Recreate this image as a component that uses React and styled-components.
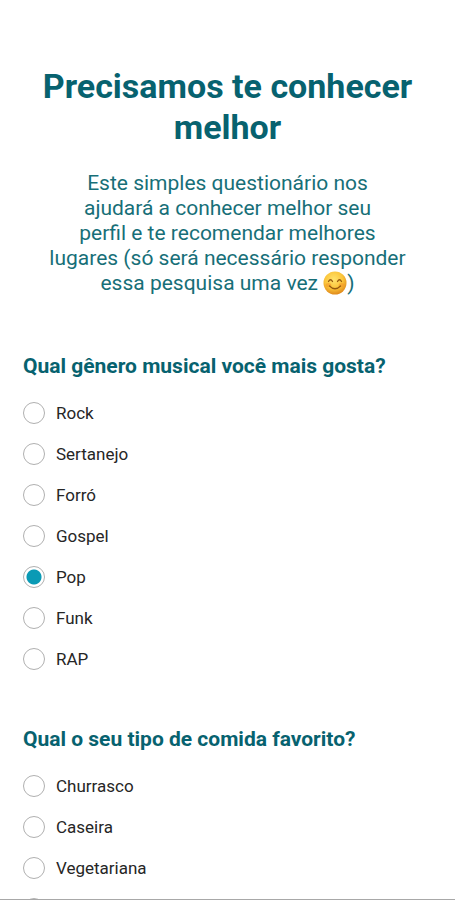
import React from "react";
import styled, { createGlobalStyle } from "styled-components";

const GlobalStyle = createGlobalStyle`
  *, *::before, *::after { box-sizing: border-box; }
  html, body, #root { height: 100%; }
  body { margin: 0; background: #fff; font-family: Roboto, sans-serif; }
`;

const Screen = styled.main`
  height: 100%;
  overflow: hidden;
  padding: 66px 23px 0;
  border-bottom: 1px solid #a8a8a8;
`;

const Title = styled.h1`
  margin: 0;
  color: #07626f;
  font-size: 34px;
  line-height: 41px;
  font-weight: 700;
  text-align: center;
`;

const Intro = styled.p`
  margin: 23px 0 57px;
  color: #176f78;
  font-size: 21px;
  line-height: 25px;
  text-align: center;
`;

const Smile = styled.svg`
  width: 24px;
  height: 24px;
  vertical-align: -5px;
`;

const Questions = styled.div`
  display: grid;
  gap: 47px;
`;

const Question = styled.fieldset`
  margin: 0;
  padding: 0;
  border: 0;
  min-width: 0;
`;

const Legend = styled.legend`
  padding: 0;
  color: #07626f;
  font-size: 21px;
  line-height: 26px;
  font-weight: 700;
`;

const Options = styled.div`
  display: grid;
  padding-top: 13px;
`;

const Option = styled.label`
  display: flex;
  align-items: center;
  gap: 11px;
  height: 41px;
  color: #262626;
  font-size: 17px;
`;

const Radio = styled.input`
  appearance: none;
  flex: none;
  width: 22px;
  height: 22px;
  margin: 0;
  border: 1px solid #b0b0b0;
  border-radius: 50%;
  background: #fff;

  &:checked {
    background: radial-gradient(circle, #0a9ab5 7px, #fff 8px);
  }
`;

const questions = [
  {
    id: "musica",
    text: "Qual gênero musical você mais gosta?",
    selected: "Pop",
    options: ["Rock", "Sertanejo", "Forró", "Gospel", "Pop", "Funk", "RAP"],
  },
  {
    id: "comida",
    text: "Qual o seu tipo de comida favorito?",
    options: ["Churrasco", "Caseira", "Vegetariana", ""],
  },
];

function SmileIcon() {
  return (
    <Smile viewBox="0 0 24 24" role="img" aria-label="Rosto sorridente">
      <defs>
        <radialGradient id="face" cx="0.45" cy="0.35" r="0.65">
          <stop offset="0" stopColor="#ffe36c" />
          <stop offset="0.6" stopColor="#fbc53a" />
          <stop offset="1" stopColor="#e08a1c" />
        </radialGradient>
      </defs>
      <circle cx="12" cy="12" r="11.5" fill="url(#face)" />
      <ellipse cx="5.5" cy="14" rx="2.8" ry="2" fill="#f59a2c" opacity="0.6" />
      <ellipse cx="18.5" cy="14" rx="2.8" ry="2" fill="#f59a2c" opacity="0.6" />
      <g fill="none" stroke="#96590f" strokeWidth="1.3" strokeLinecap="round">
        <path d="M5.5 10.5 Q7.5 7 9.5 10.5" />
        <path d="M14.5 10.5 Q16.5 7 18.5 10.5" />
        <path d="M6.5 15 Q12 20.5 17.5 15" />
      </g>
    </Smile>
  );
}

export default function App() {
  return (
    <>
      <GlobalStyle />
      <Screen>
        <Title>Precisamos te conhecer melhor</Title>
        <Intro>
          Este simples questionário nos
          <br />
          ajudará a conhecer melhor seu
          <br />
          perfil e te recomendar melhores
          <br />
          lugares (só será necessário responder
          <br />
          essa pesquisa uma vez <SmileIcon />)
        </Intro>
        <Questions>
          {questions.map((q) => (
            <Question key={q.id}>
              <Legend>{q.text}</Legend>
              <Options>
                {q.options.map((option) => (
                  <Option key={option}>
                    <Radio
                      type="radio"
                      name={q.id}
                      value={option}
                      aria-label={option || "Outra"}
                      defaultChecked={option === q.selected}
                    />
                    {option}
                  </Option>
                ))}
              </Options>
            </Question>
          ))}
        </Questions>
      </Screen>
    </>
  );
}
